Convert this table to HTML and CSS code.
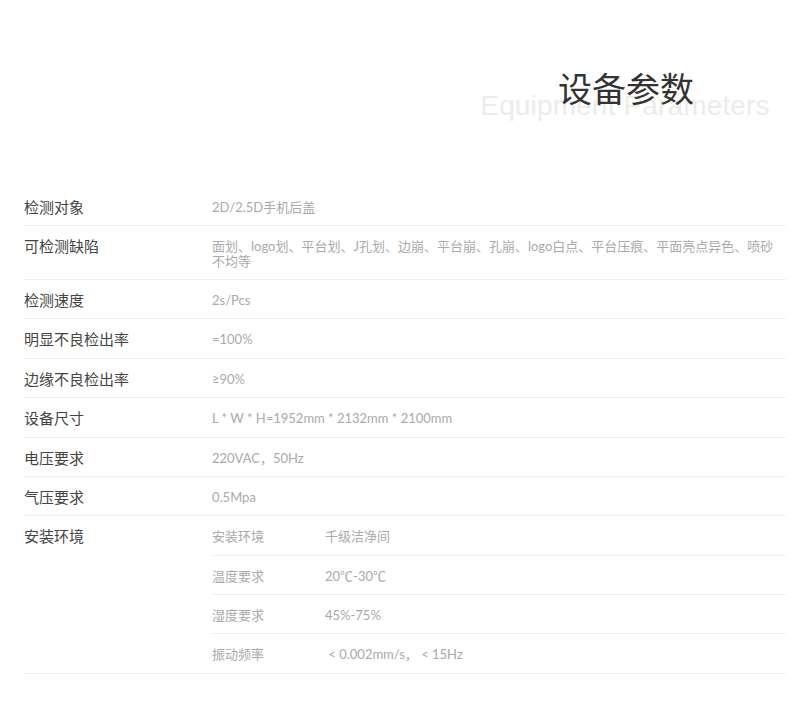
FILE: index.html
```html
<!DOCTYPE html>
<html lang="zh">
<head>
<meta charset="utf-8">
<title>设备参数</title>
<link rel="stylesheet" href="styles.css">
</head>
<body>
<div class="page">
  <header class="head">
    <div class="head-stack">
      <div class="head-en">Equipment Parameters</div>
      <h1 class="head-cn">设备参数</h1>
    </div>
  </header>
  <div class="spec">
    <div class="row">
      <div class="label">检测对象</div>
      <div class="value">2D/2.5D手机后盖</div>
    </div>
    <div class="row">
      <div class="label">可检测缺陷</div>
      <div class="value">面划、logo划、平台划、J孔划、边崩、平台崩、孔崩、logo白点、平台压痕、平面亮点异色、喷砂不均等</div>
    </div>
    <div class="row">
      <div class="label">检测速度</div>
      <div class="value">2s/Pcs</div>
    </div>
    <div class="row">
      <div class="label">明显不良检出率</div>
      <div class="value">=100%</div>
    </div>
    <div class="row">
      <div class="label">边缘不良检出率</div>
      <div class="value">≥90%</div>
    </div>
    <div class="row">
      <div class="label">设备尺寸</div>
      <div class="value">L * W * H=1952mm * 2132mm * 2100mm</div>
    </div>
    <div class="row">
      <div class="label">电压要求</div>
      <div class="value">220VAC，50Hz</div>
    </div>
    <div class="row">
      <div class="label">气压要求</div>
      <div class="value">0.5Mpa</div>
    </div>
    <div class="row">
      <div class="label">安装环境</div>
      <div class="sub">
        <div class="sub-row"><div class="sub-label">安装环境</div><div class="sub-value">千级洁净间</div></div>
        <div class="sub-row"><div class="sub-label">温度要求</div><div class="sub-value">20℃-30℃</div></div>
        <div class="sub-row"><div class="sub-label">湿度要求</div><div class="sub-value">45%-75%</div></div>
        <div class="sub-row"><div class="sub-label">振动频率</div><div class="sub-value">&nbsp;&lt; 0.002mm/s，&nbsp;&lt; 15Hz</div></div>
      </div>
    </div>
  </div>
</div>
</body>
</html>
```

FILE: styles.css
```css
* { box-sizing: border-box; }
html, body { margin: 0; padding: 0; background: #fff; }
body {
  font-family: "Noto Sans CJK SC", "Open Sans", sans-serif;
  color: #333;
}
.page {
  width: 800px;
  padding: 0 14px 0 24px;
}
.head {
  display: flex;
  justify-content: flex-end;
  padding-top: 68px;
  height: 187px;
}
.head-stack {
  display: grid;
  width: 324px;
  text-align: center;
}
.head-en, .head-cn { grid-area: 1 / 1; }
.head-en {
  font-family: "Liberation Sans", Arial, sans-serif;
  font-size: 28px;
  line-height: 34px;
  color: #ececec;
  padding-top: 21px;
  padding-left: 2px;
  letter-spacing: 0.15px;
}
.head-cn {
  margin: 0;
  font-size: 34px;
  font-weight: 400;
  line-height: 40px;
  color: #333;
  padding-left: 4px;
}
.spec { width: 762px; }
.row {
  display: flex;
  border-bottom: 1px solid #f0f0f0;
}
.label {
  width: 188px;
  flex: none;
  font-size: 15px;
  line-height: 20px;
  padding: 10px 0 8.4px;
  color: #444;
}
.value, .sub-label, .sub-value {
  font-family: "Lato", "Noto Sans CJK SC", sans-serif;
  font-size: 13px;
  line-height: 14.3px;
  padding: 13px 0 11px;
  color: #aaa;
}
.value { flex: 1; }
.sub { flex: 1; }
.sub-row {
  display: flex;
  border-bottom: 1px solid #f0f0f0;
}
.sub-row:last-child { border-bottom: none; }
.sub-label {
  width: 113px;
  flex: none;
}
.sub-value { flex: 1; }
```
